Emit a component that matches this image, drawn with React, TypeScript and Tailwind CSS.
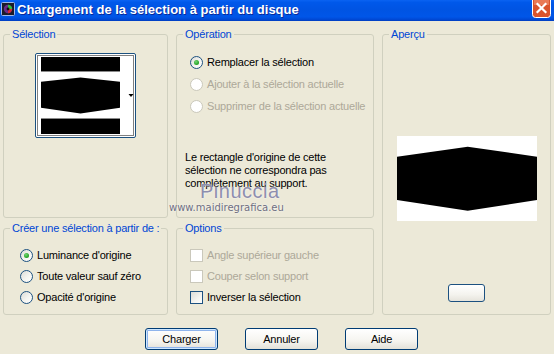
import React from "react";

const font = "font-['Liberation_Sans',Arial,sans-serif]";

function Radio({ checked, disabled }: { checked?: boolean; disabled?: boolean }) {
  return (
    <span
      className={
        "flex h-[13px] w-[13px] shrink-0 items-center justify-center rounded-full border " +
        (disabled
          ? "border-[#CAC8BB] bg-white"
          : "border-[#1C5180] bg-[linear-gradient(135deg,#DCDCD7_0%,#F4F4F0_55%,#FFFFFF_100%)]")
      }
    >
      {checked && (
        <span className="h-[5px] w-[5px] rounded-full bg-[radial-gradient(circle_at_40%_35%,#73D673_0%,#21A121_70%,#1A8A1A_100%)]" />
      )}
    </span>
  );
}

function Check({ disabled }: { disabled?: boolean }) {
  return (
    <span
      className={
        "h-[13px] w-[13px] shrink-0 border " +
        (disabled
          ? "border-[#CAC8BB] bg-white"
          : "border-[#1C5180] bg-[linear-gradient(135deg,#DCDCD7_0%,#F4F4F0_60%,#FFFFFF_100%)]")
      }
    />
  );
}

function Group({
  title,
  className,
  children,
}: {
  title: string;
  className?: string;
  children?: React.ReactNode;
}) {
  return (
    <fieldset className={"rounded-[3px] border border-[#D0D0BF] " + (className ?? "")}>
      <legend className="ml-[6px] px-[2px] text-[11px] leading-[13px] tracking-[-0.2px] text-[#0046D5]">
        {title}
      </legend>
      {children}
    </fieldset>
  );
}

function Row({
  children,
  label,
  disabled,
  h = "h-[22px]",
}: {
  children: React.ReactNode;
  label: string;
  disabled?: boolean;
  h?: string;
}) {
  return (
    <div className={"flex items-center gap-[4px] " + h}>
      {children}
      <span className={disabled ? "text-[#ACA899]" : "text-black"}>{label}</span>
    </div>
  );
}

function XpButton({ label, primary }: { label: string; primary?: boolean }) {
  return (
    <button
      className={
        "h-[22px] w-[73px] rounded-[3px] border border-[#003C74] bg-[linear-gradient(180deg,#FFFFFF_0%,#F5F4EF_60%,#E3E1D8_100%)] text-[11px] tracking-[-0.2px] text-black " +
        (primary ? "shadow-[inset_0_0_0_1px_#CEE7FF,inset_0_0_0_2px_#8FB4EC]" : "")
      }
    >
      {label}
    </button>
  );
}

export default function App() {
  return (
    <div className={"relative flex h-[354px] w-[554px] flex-col overflow-hidden bg-[#ECE9D8] " + font}>
      {/* Title bar */}
      <div className="flex h-[21px] shrink-0 items-start overflow-hidden bg-[linear-gradient(180deg,#0A63F2_0%,#0058EA_12%,#0054E3_45%,#0056E8_80%,#0049D6_92%,#003DC0_100%)]">
        <svg width="14" height="14" viewBox="0 0 14 14" className="ml-[1px] mt-[2px] shrink-0">
          <rect x="0.5" y="0.5" width="13" height="13" rx="1" fill="#1B1B2A" stroke="#9FB8E8" />
          <circle cx="7" cy="7" r="4.2" fill="#6A2A8A" />
          <path d="M7 2.8 A4.2 4.2 0 0 1 11.2 7 L7 7 Z" fill="#2FBF3F" />
          <path d="M7 7 L11.2 7 A4.2 4.2 0 0 1 7 11.2 Z" fill="#D8283A" />
          <circle cx="7" cy="7" r="1.4" fill="#111" />
        </svg>
        <span className="ml-[2px] mt-[2px] text-[13px] font-bold leading-[16px] text-white [text-shadow:1px_1px_0_#0A2A9A]">
          Chargement de la sélection à partir du disque
        </span>
        <svg width="19" height="18" viewBox="0 0 19 18" className="mr-[3px] ml-auto shrink-0">
          <rect x="0.5" y="-3" width="18" height="20.5" rx="3" fill="#D9532C" stroke="#FFFFFF" />
          <rect x="2" y="-1" width="15" height="6" fill="#E97A56" />
          <path d="M5.5 4 L13.5 12 M13.5 4 L5.5 12" stroke="#FFFFFF" strokeWidth="2.2" strokeLinecap="square" />
        </svg>
      </div>

      {/* Body */}
      <div className="pl-[3px] pt-[7px] text-[11px] leading-[13px] tracking-[-0.2px]">
        <div className="grid grid-cols-[165px_198px_169px] grid-rows-[190px_93px] gap-x-[8px] gap-y-[4px]">
          <Group title="Sélection" className="h-[190px]">
            <div className="flex justify-center pt-[12px]">
              <div className="h-[85px] w-[101px] rounded-[2px] border border-[#1C5180] bg-white">
                <svg width="99" height="83" viewBox="0 0 99 83">
                  <rect x="1.5" y="1.5" width="96" height="80" fill="white" stroke="black" strokeDasharray="1 1" />
                  <rect x="5" y="3" width="79" height="14" fill="black" />
                  <rect x="5" y="17" width="79" height="1" fill="#8A8A8A" />
                  <polygon points="5,27.7 44.5,23.4 84,27.7 84,53.7 44.5,59.4 5,53.7" fill="black" />
                  <rect x="5" y="64" width="79" height="1" fill="#8A8A8A" />
                  <rect x="5" y="65" width="79" height="15" fill="black" />
                  <polygon points="92.5,40 97.5,40 95,43" fill="black" />
                </svg>
              </div>
            </div>
          </Group>

          <Group title="Opération" className="h-[190px]">
            <div className="pl-[13px] pt-[10px]">
              <Row label="Remplacer la sélection">
                <Radio checked />
              </Row>
              <Row label="Ajouter à la sélection actuelle" disabled>
                <Radio disabled />
              </Row>
              <Row label="Supprimer de la sélection actuelle" disabled>
                <Radio disabled />
              </Row>
            </div>
            <p className="mt-[34px] pl-[8px] text-black">
              Le rectangle d'origine de cette
              <br />
              sélection ne correspondra pas
              <br />
              complètement au support.
            </p>
          </Group>

          <Group title="Aperçu" className="row-span-2 h-[287px]">
            <div className="flex flex-col items-center pt-[95px]">
              <svg width="140" height="85" viewBox="0 0 140 85">
                <rect width="140" height="85" fill="white" />
                <polygon points="0,20.7 70.7,10.7 140,20.7 140,64 70.7,74.7 0,64" fill="black" />
              </svg>
              <button className="mt-[63px] h-[18px] w-[37px] rounded-[3px] border border-[#1C5180] bg-[linear-gradient(180deg,#FFFFFF_0%,#F4F3EE_60%,#E6E4DC_100%)]" />
            </div>
          </Group>

          <Group title="Créer une sélection à partir de :" className="h-[93px]">
            <div className="pl-[16px] pt-[10px]">
              <Row label="Luminance d'origine" h="h-[21px]">
                <Radio checked />
              </Row>
              <Row label="Toute valeur sauf zéro" h="h-[21px]">
                <Radio />
              </Row>
              <Row label="Opacité d'origine" h="h-[21px]">
                <Radio />
              </Row>
            </div>
          </Group>

          <Group title="Options" className="h-[93px]">
            <div className="pl-[13px] pt-[10px]">
              <Row label="Angle supérieur gauche" disabled h="h-[21px]">
                <Check disabled />
              </Row>
              <Row label="Couper selon support" disabled h="h-[21px]">
                <Check disabled />
              </Row>
              <Row label="Inverser la sélection" h="h-[21px]">
                <Check />
              </Row>
            </div>
          </Group>
        </div>

        <div className="mt-[13px] flex justify-center gap-[27px] pl-[6px]">
          <XpButton label="Charger" primary />
          <XpButton label="Annuler" />
          <XpButton label="Aide" />
        </div>
      </div>

      {/* Watermark */}
      <div className="pointer-events-none absolute left-[169px] top-[180px] flex flex-col">
        <span className="ml-[31px] text-[20px] leading-[22px] tracking-[0.5px] text-[#8E8EAE] [text-shadow:0_0_2px_#ffffff]">
          Pinuccia
        </span>
        <span className="font-['DejaVu_Sans',sans-serif] text-[10px] leading-[12px] text-[#6E6E80] [text-shadow:0_0_2px_#ffffff]">
          www.maidiregrafica.eu
        </span>
      </div>
    </div>
  );
}
